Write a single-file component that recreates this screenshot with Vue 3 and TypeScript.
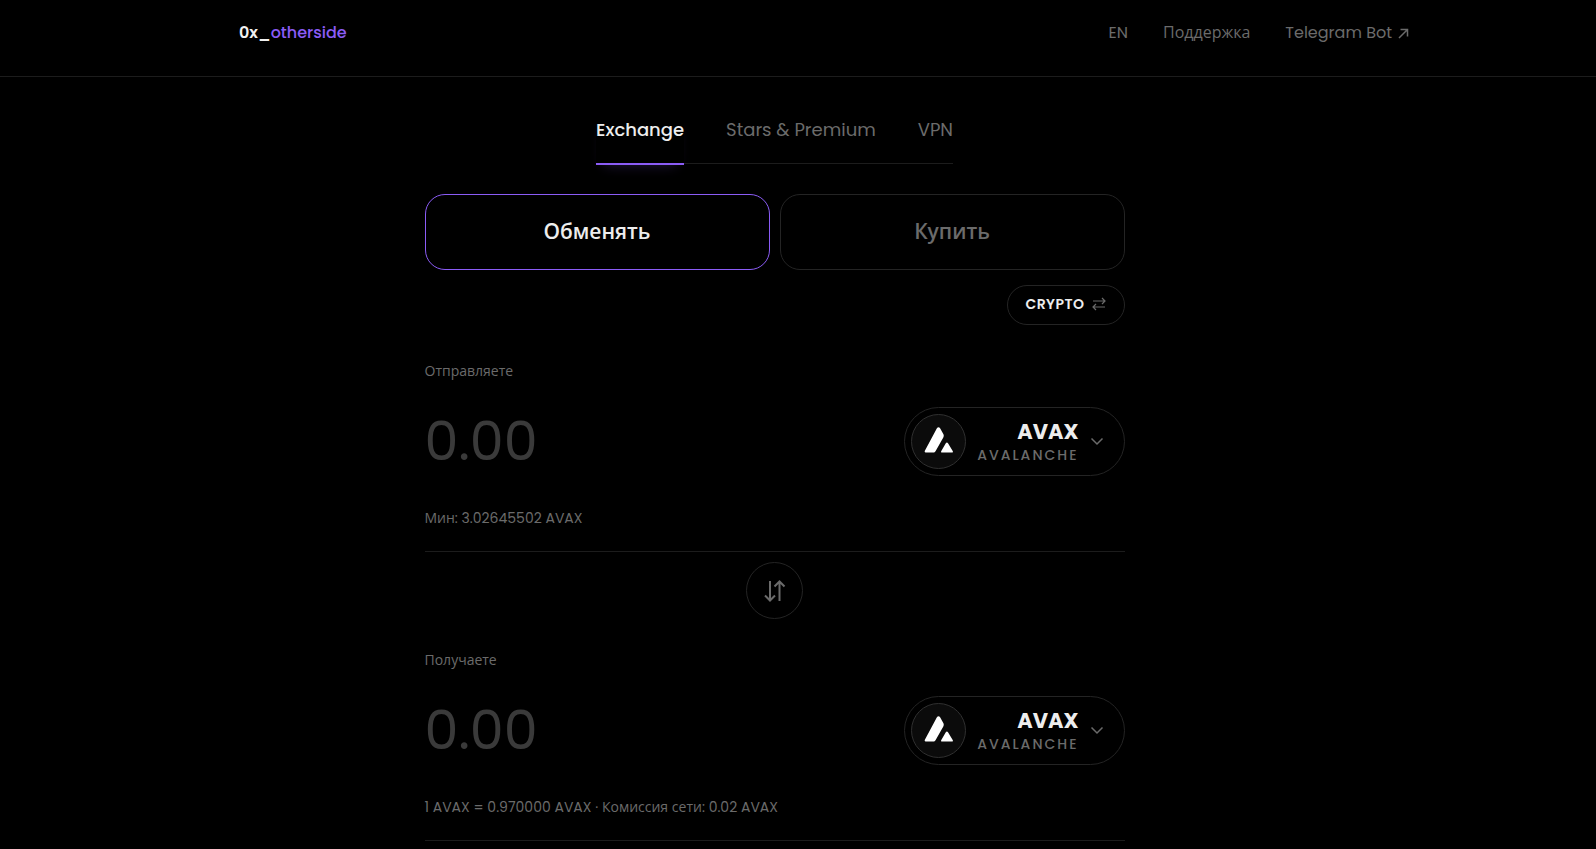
<script setup lang="ts">
import { ref } from 'vue'

interface Side {
  id: string
  label: string
  coin: string
  network: string
}

const tabs = ['Exchange', 'Stars & Premium', 'VPN']
const activeTab = ref('Exchange')
const modes = ['Обменять', 'Купить']
const activeMode = ref('Обменять')

const sides: Side[] = [
  { id: 'send', label: 'Отправляете', coin: 'AVAX', network: 'Avalanche' },
  { id: 'receive', label: 'Получаете', coin: 'AVAX', network: 'Avalanche' },
]
const amounts = ref<string[]>(['', ''])
</script>

<template>
  <div class="page">
    <header class="header">
      <a class="brand" href="#"><b>0x_</b><span>otherside</span></a>
      <nav class="nav">
        <button type="button" class="lang">EN</button>
        <a href="#">Поддержка</a>
        <a href="#" class="bot">
          Telegram Bot
          <svg viewBox="0 0 11 11" width="11" height="11" aria-hidden="true">
            <path d="M1 10 9.500 1.500M2.500 1.500h7v7" />
          </svg>
        </a>
      </nav>
    </header>

    <main class="main">
      <nav class="tabs">
        <button
          v-for="tab in tabs"
          :key="tab"
          type="button"
          class="tab"
          :class="{ active: tab === activeTab }"
          @click="activeTab = tab"
        >{{ tab }}</button>
      </nav>

      <div class="modes">
        <button
          v-for="mode in modes"
          :key="mode"
          type="button"
          class="mode"
          :class="{ active: mode === activeMode }"
          @click="activeMode = mode"
        >{{ mode }}</button>
      </div>

      <button type="button" class="kind">
        CRYPTO
        <svg viewBox="0 0 14 14" width="14" height="14" aria-hidden="true">
          <path d="M1 4h12M10 1l3 3-3 3M13 10H1M4 7l-3 3 3 3" />
        </svg>
      </button>

      <template v-for="(side, i) in sides" :key="side.id">
        <section class="side">
          <label class="label" :for="side.id">{{ side.label }}</label>
          <div class="row">
            <input :id="side.id" v-model="amounts[i]" class="amount" type="text" inputmode="decimal" placeholder="0.00" />
            <button type="button" class="coin" aria-haspopup="listbox">
              <span class="token">
                <svg viewBox="-1 0 31 26" width="31" height="26" aria-hidden="true">
                  <path d="M12.900 1.300c.9-1.500 2.300-1.500 3.200 0l3.200 5.800c.6 1.200.6 2.200 0 3.300l-7.800 13.800c-.5.9-1.200 1.300-2.200 1.300H2.200c-1.400 0-1.900-.9-1.200-2.100z" />
                  <path d="M21.800 16.200c.6-1.100 1.600-1.100 2.200 0l4.700 7.800c.6 1 .1 1.500-.9 1.500h-9.600c-1.100 0-1.500-.7-.9-1.600z" />
                </svg>
              </span>
              <span class="names">
                <strong>{{ side.coin }}</strong>
                <small>{{ side.network }}</small>
              </span>
              <svg class="chevron" viewBox="0 0 14 14" width="14" height="14" aria-hidden="true">
                <path d="M1.500 3.500 7 9l5.500-5.500" />
              </svg>
            </button>
          </div>
          <p v-if="i === 0" class="hint">Мин: 3.02645502 AVAX</p>
          <p v-else class="hint">1 AVAX = 0.970000 AVAX · Комиссия сети: 0.02 AVAX</p>
        </section>
        <button v-if="i === 0" type="button" class="swap" aria-label="Поменять местами">
          <svg viewBox="0 0 22 22" width="22" height="22" aria-hidden="true">
            <path d="M6 1v20M1 15.500l5 5 5-5M15.500 21V2M10.500 6.500l5-5 5 5" />
          </svg>
        </button>
      </template>
    </main>
  </div>
</template>

<style>
body {
  margin: 0;
  background: #000;
}
</style>

<style scoped>
.page {
  max-height: 100vh;
  overflow: hidden;
  background: #000;
  color: #6b6b6b;
  font-family: Poppins, "Open Sans", "Noto Sans", sans-serif;
  font-size: 16px;
}

* {
  box-sizing: border-box;
}

button {
  padding: 0;
  border: 0;
  background: none;
  color: inherit;
  font: inherit;
  cursor: pointer;
}

a {
  color: inherit;
  text-decoration: none;
}

svg {
  fill: none;
  stroke: currentColor;
  stroke-width: 1.5;
}

.header {
  display: flex;
  justify-content: space-between;
  align-items: flex-start;
  height: 77px;
  padding: 21px 187px 0 239px;
  border-bottom: 1px solid #1c1c1c;
  line-height: 24px;
}

.brand span {
  color: #8b5cf6;
  font-weight: 500;
}

.brand b {
  color: #f0f0f0;
  font-weight: 600;
}

.nav {
  display: flex;
  gap: 35px;
}

.bot {
  display: flex;
  align-items: center;
  gap: 6px;
}

.main {
  display: flex;
  flex-direction: column;
  max-width: 747px;
  margin: 0 auto;
  padding-right: 47px;
}

.tabs {
  display: flex;
  align-self: center;
  gap: 42px;
  height: 54px;
  margin: 33px 0 30px;
  border-bottom: 1px solid #1c1c1c;
}

.tab {
  height: 55px;
  padding-bottom: 13px;
  border-bottom: 2px solid transparent;
  font-size: 18px;
  line-height: 24px;
}

.tab.active {
  border-color: #8b5cf6;
  color: #ededed;
  font-weight: 500;
  box-shadow: 0 8px 12px -8px #8b5cf640;
}

.modes {
  display: grid;
  grid-template-columns: 1fr 1fr;
  gap: 10px;
}

.mode {
  height: 76px;
  padding-bottom: 2px;
  border: 1px solid #242424;
  border-radius: 20px;
  font-size: 21px;
  font-weight: 600;
}

.mode.active {
  border-color: #8b5cf6;
  color: #ededed;
}

.kind {
  display: flex;
  align-self: flex-end;
  align-items: center;
  justify-content: center;
  gap: 7px;
  width: 118px;
  height: 40px;
  margin-top: 15px;
  padding-bottom: 2px;
  border: 1px solid #242424;
  border-radius: 20px;
  color: #ededed;
  font-size: 14px;
  font-weight: 600;
  letter-spacing: 0.5px;
}

.kind svg {
  color: #6b6b6b;
  stroke-width: 1.2;
}

.side {
  display: flex;
  flex-direction: column;
  padding-bottom: 22px;
  border-bottom: 1px solid #1c1c1c;
}

.kind + .side {
  margin-top: 35px;
}

.label {
  font-size: 14px;
  line-height: 22px;
}

.row {
  display: flex;
  align-items: center;
  justify-content: space-between;
  margin-top: 25px;
}

.amount {
  flex: 1;
  min-width: 0;
  height: 69px;
  padding: 0;
  border: 0;
  outline: 0;
  background: none;
  color: #ededed;
  font: inherit;
  font-size: 54px;
}

.amount::placeholder {
  color: #3a3a3a;
  opacity: 1;
}

.coin {
  display: flex;
  align-items: center;
  width: 221px;
  height: 69px;
  padding: 6px 20px 6px 6px;
  border: 1px solid #242424;
  border-radius: 35px;
}

.token {
  display: grid;
  place-items: center;
  width: 55px;
  height: 55px;
  border: 1px solid #303030;
  border-radius: 50%;
  background: #0b0b0b;
}

.token svg {
  margin-bottom: 4px;
  fill: #fff;
  stroke: none;
}

.names {
  display: flex;
  flex: 1;
  flex-direction: column;
  align-items: flex-end;
  padding-top: 2px;
}

.names strong {
  color: #ededed;
  font-size: 21px;
  font-weight: 700;
  line-height: 24px;
}

.names small {
  font-size: 14px;
  font-weight: 500;
  letter-spacing: 2px;
  line-height: 22px;
  text-transform: uppercase;
}

.chevron {
  margin-left: 11px;
}

.hint {
  margin: 32px 0 0;
  font-size: 14px;
  line-height: 21px;
}

.swap {
  display: grid;
  place-items: center;
  align-self: center;
  width: 57px;
  height: 57px;
  margin: 10px 0 30px;
  border: 1px solid #242424;
  border-radius: 50%;
}

.swap svg {
  stroke-width: 2;
}
</style>
